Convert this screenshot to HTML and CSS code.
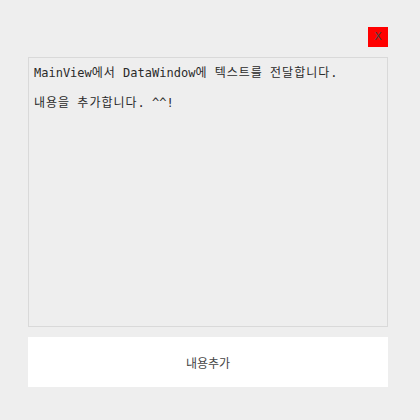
FILE: index.html
```html
<!DOCTYPE html>
<html lang="ko">
<head>
<meta charset="utf-8">
<link rel="stylesheet" href="styles.css">
</head>
<body>
<div class="panel">
  <div class="top">
    <button class="close" type="button">X</button>
  </div>
  <div class="textbox">MainView<span class="ko">에서</span> DataWindow<span class="ko">에</span> <span class="ko">텍스트를</span> <span class="ko">전달합니다</span>.

<span class="ko">내용을</span> <span class="ko">추가합니다</span>. ^^!</div>
  <button class="add" type="button">내용추가</button>
</div>
</body>
</html>
```
FILE: styles.css
```css
html, body {
  margin: 0;
  padding: 0;
  background: #eeeeee;
}
.panel {
  width: 360px;
  padding: 27px 0 0 28px;
  display: flex;
  flex-direction: column;
  gap: 10px;
}
.top {
  display: flex;
  justify-content: flex-end;
}
.close {
  width: 20px;
  height: 20px;
  margin: 0;
  padding: 0;
  border: none;
  background: #ff0000;
  color: #444;
  font-family: "DejaVu Sans", sans-serif;
  font-size: 11px;
  line-height: 20px;
}
.textbox {
  box-sizing: border-box;
  height: 270px;
  border: 1px solid #d9d9d9;
  padding: 8px 5px 6px;
  font-family: "DejaVu Sans Mono", "Noto Sans CJK KR", monospace;
  font-size: 12px;
  line-height: 15px;
  color: #2a2a2a;
  white-space: pre-wrap;
}
.ko {
  letter-spacing: 1px;
}
.add {
  height: 50px;
  margin: 0;
  border: none;
  background: #ffffff;
  color: #444;
  font-family: "Noto Sans CJK KR", sans-serif;
  font-size: 12px;
}
```
